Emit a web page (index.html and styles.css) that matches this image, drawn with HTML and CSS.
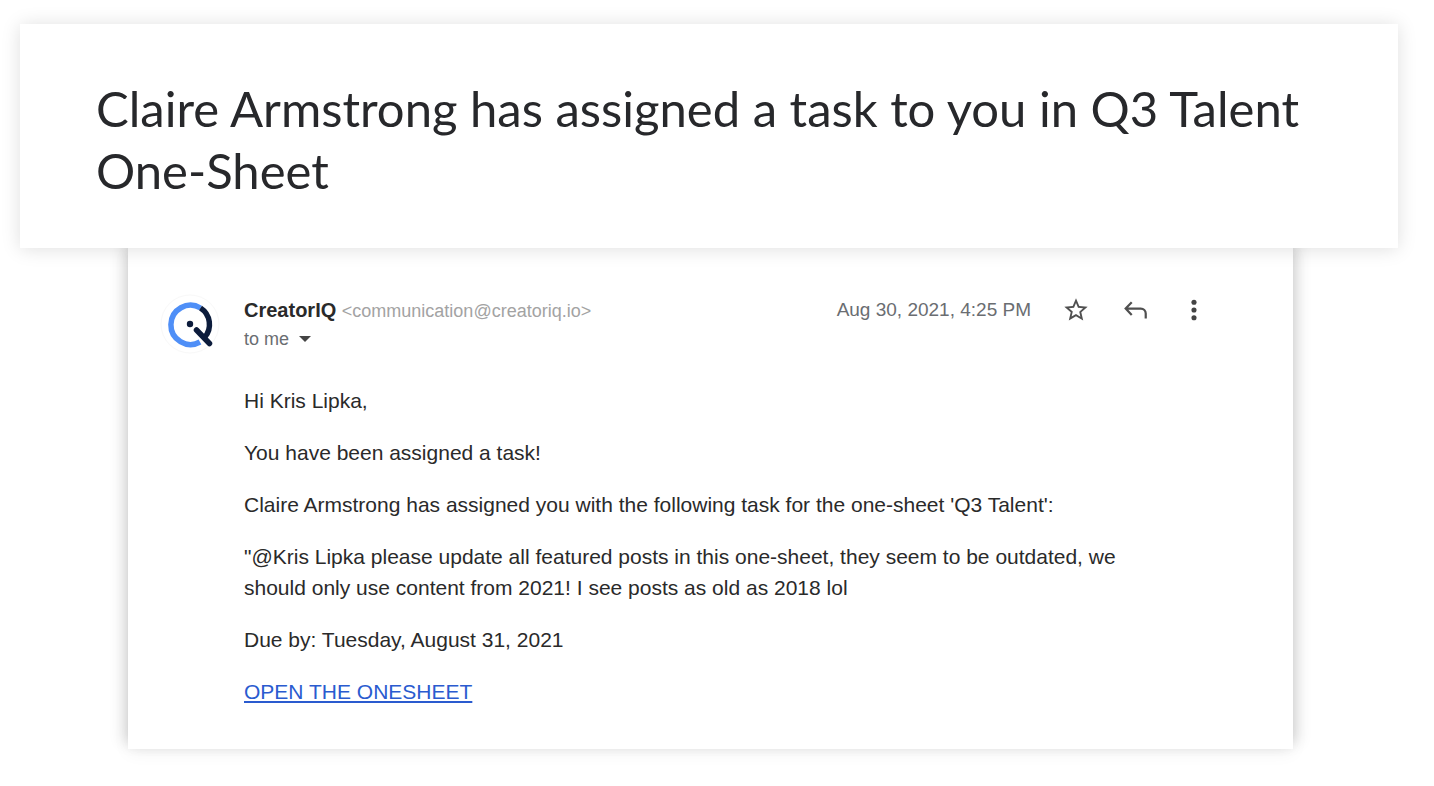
FILE: index.html
```html
<!DOCTYPE html>
<html lang="en">
<head>
  <meta charset="UTF-8">
  <meta name="viewport" content="width=device-width, initial-scale=1">
  <title>Claire Armstrong has assigned a task to you in Q3 Talent One-Sheet</title>
  <link rel="stylesheet" href="styles.css">
</head>
<body>

<header class="subject">
  <h1>Claire Armstrong has assigned a task to you in Q3 Talent One-Sheet</h1>
</header>

<main class="mail">
  <div class="avatar">
    <svg viewBox="0 0 60 60" aria-hidden="true">
      <circle cx="30" cy="30" r="29" fill="#fff" stroke="#f8f8f8"/>
      <path d="M40 48A19.6 19.6 0 1 1 40.5 14" fill="none" stroke="#4f8ff7" stroke-width="5.5"/>
      <path d="M40.5 14A19.6 19.6 0 0 1 44.5 43.5" fill="none" stroke="#0c1c3c" stroke-width="5.5"/>
      <path d="M36.5 36L49.5 49.5" fill="none" stroke="#0c1c3c" stroke-width="5.5" stroke-linecap="round"/>
      <circle cx="30" cy="30" r="3.2" fill="#0c1c3c"/>
    </svg>
  </div>

  <div class="content">
    <div class="mail-header">
      <div class="sender"><strong>CreatorIQ</strong> <span class="email">&lt;communication@creatoriq.io&gt;</span></div>
      <time class="date" datetime="2021-08-30T16:25">Aug 30, 2021, 4:25 PM</time>
      <div class="actions">
        <button type="button" aria-label="Star">
          <svg viewBox="0 0 24 24"><path fill="#505050" d="M22 9.24l-7.19-.62L12 2 9.19 8.63 2 9.24l5.46 4.73L5.82 21 12 17.27 18.18 21l-1.63-7.03L22 9.24zM12 15.4l-3.76 2.27 1-4.28-3.32-2.88 4.38-.38L12 6.1l1.71 4.04 4.38.38-3.32 2.88 1 4.28L12 15.4z"/></svg>
        </button>
        <button type="button" aria-label="Reply">
          <svg viewBox="0 0 24 24"><path fill="none" stroke="#505050" stroke-width="1.9" d="M9.2 5.4L4 10.8l5.2 5.4M4 10.8H17a4.2 4.2 0 0 1 4.2 4.2v4.2"/></svg>
        </button>
        <button type="button" aria-label="More">
          <svg viewBox="0 0 24 24"><g fill="#444"><circle cx="12" cy="5.4" r="2.2"/><circle cx="12" cy="12" r="2.2"/><circle cx="12" cy="18.6" r="2.2"/></g></svg>
        </button>
      </div>
    </div>

    <button type="button" class="recipient">to me
      <svg viewBox="0 0 12 6" aria-hidden="true"><path fill="#444" d="M0 0h12L6 6z"/></svg>
    </button>

    <div class="message">
      <p>Hi Kris Lipka,</p>
      <p>You have been assigned a task!</p>
      <p>Claire Armstrong has assigned you with the following task for the one-sheet 'Q3 Talent':</p>
      <p>"@Kris Lipka please update all featured posts in this one-sheet, they seem to be outdated, we should only use content from 2021! I see posts as old as 2018 lol</p>
      <p>Due by: Tuesday, August 31, 2021</p>
      <p><a href="#">OPEN THE ONESHEET</a></p>
    </div>
  </div>
</main>

</body>
</html>
```
FILE: styles.css
```css
* { box-sizing: border-box; }
body { margin: 0; padding: 24px 36px 36px 20px; background: #fff; color: #2a2a2a; font-family: "Liberation Sans", Arial, sans-serif; font-size: 21px; }
.subject { position: relative; z-index: 1; padding: 53px 76px 47px; background: #fff; box-shadow: 0 1px 18px rgba(0, 0, 0, 0.13); }
h1 { margin: 0; color: #27282b; font-family: Lato, sans-serif; font-size: 49px; font-weight: 400; line-height: 62px; }
.mail { display: flex; gap: 24px; margin: 0 105px 0 108px; padding: 46px 85px 42px 32px; background: #fff; box-shadow: 5px -6px 14px rgba(0, 0, 0, 0.12), -5px -6px 14px rgba(0, 0, 0, 0.12), 0 4px 16px rgba(0, 0, 0, 0.05); }
.avatar { flex: none; width: 60px; height: 60px; }
.avatar svg { display: block; width: 60px; height: 60px; }
.content { flex: 1; min-width: 0; }
.mail-header { display: flex; align-items: center; height: 32px; }
.sender { flex: 1; font-size: 20px; }
.email { color: #a3a3a3; font-size: 18px; }
.date { color: #6a6d71; font-size: 19px; }
.actions { display: flex; gap: 31px; margin-left: 31px; }
button { padding: 0; border: 0; background: none; color: #6a6d71; font: inherit; cursor: pointer; }
.actions button { width: 28px; height: 28px; }
.actions svg { display: block; width: 28px; height: 28px; }
.recipient { display: flex; align-items: center; gap: 10px; height: 26px; font-size: 18px; }
.recipient svg { width: 12px; height: 6px; }
.message { max-width: 880px; margin-top: 33px; line-height: 31px; }
.message p { margin: 0 0 21px; }
.message p:last-child { margin-bottom: 0; }
.message a { color: #2a5bcf; }
@media (max-width: 900px) {
  .mail { margin: 0 16px; padding: 32px 16px; }
  .mail-header { flex-wrap: wrap; height: auto; }
  h1 { font-size: 32px; line-height: 40px; }
}
```
